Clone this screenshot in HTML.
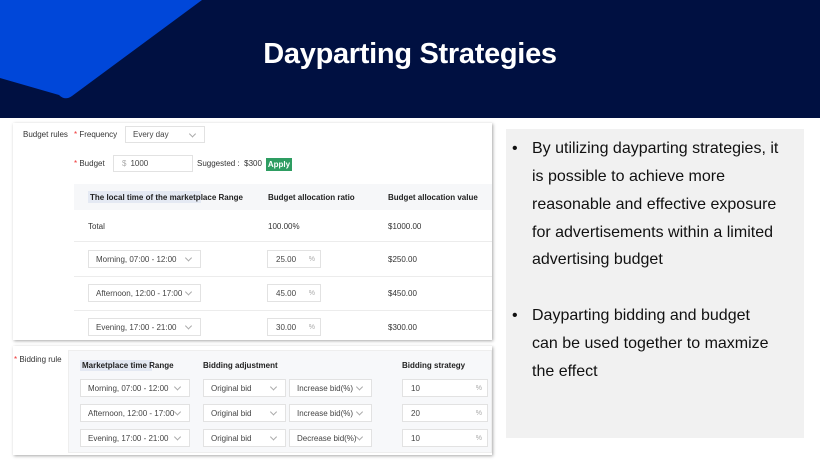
<!DOCTYPE html>
<html><head><style>
*{margin:0;padding:0;box-sizing:border-box}
body{width:820px;height:460px;position:relative;background:#fff;font-family:"Liberation Sans",sans-serif;overflow:hidden}
.a{position:absolute;white-space:nowrap}
.hdr{position:absolute;left:0;top:0;width:820px;height:118px;background:#001041}
.t{font-size:8px;color:#333}
.b{font-size:8px;color:#222;font-weight:bold}
.sel{position:absolute;border:1px solid #e2e2e2;background:#fff;font-size:8px;color:#444;padding-left:7px;display:flex;align-items:center}
.sel:after{content:"";position:absolute;right:9px;top:50%;width:4px;height:4px;border-right:1px solid #aaa;border-bottom:1px solid #aaa;transform:translateY(-70%) rotate(45deg)}
.inp{position:absolute;border:1px solid #e2e2e2;background:#fff;font-size:8px;color:#444;padding-left:8px;display:flex;align-items:center}
.pc{position:absolute;right:5px;color:#aaa;font-size:7px}
.line{position:absolute;height:1px;background:#ececec}
.bl{position:absolute;left:532px;font-size:16px;color:#111;white-space:nowrap}
.dot{position:absolute;left:512px;font-size:16px;color:#111}
</style></head><body>
<div class="hdr"></div>
<svg class="a" style="left:0;top:0" width="220" height="110"><path d="M0 0 L202 0 L72 96 Q65 101 59 95 L0 78 Z" fill="#0047d9"/></svg>
<div class="a" style="left:0;top:38px;width:820px;text-align:center;color:#fff;font-size:29px;font-weight:bold;letter-spacing:-0.3px">Dayparting Strategies</div>

<!-- card 1 -->
<div class="a" style="left:13px;top:123px;width:479px;height:217px;background:#fff;box-shadow:1px 1px 3px rgba(0,0,0,.35)"></div>
<div class="a t" style="left:23px;top:130px">Budget rules</div>
<div class="a t" style="left:74px;top:130px"><span style="color:#e33">*</span> Frequency</div>
<div class="sel" style="left:125px;top:126px;width:80px;height:17px">Every day</div>
<div class="a t" style="left:74px;top:159px"><span style="color:#e33">*</span> Budget</div>
<div class="inp" style="left:113px;top:155px;width:80px;height:17px"><span style="color:#aaa;margin-right:4px">$</span>1000</div>
<div class="a t" style="left:197px;top:159px">Suggested :&nbsp; $300</div>
<div class="a" style="left:266px;top:158px;width:26px;height:13px;background:#2e9d62;color:#fff;font-size:8px;font-weight:bold;text-align:center;line-height:13px">Apply</div>
<div class="a" style="left:74px;top:184px;width:418px;height:26px;background:#f6f7f9"></div>
<div class="a" style="left:88px;top:191px;width:113px;height:12px;background:#e4e9f3"></div>
<div class="a b" style="left:90px;top:193px">The local time of the marketplace Range</div>
<div class="a b" style="left:268px;top:193px">Budget allocation ratio</div>
<div class="a b" style="left:388px;top:193px">Budget allocation value</div>
<div class="a t" style="left:88px;top:222px">Total</div>
<div class="a t" style="left:268px;top:222px">100.00%</div>
<div class="a t" style="left:388px;top:222px">$1000.00</div>
<div class="line" style="left:74px;top:241px;width:418px"></div>
<div class="line" style="left:74px;top:276px;width:418px"></div>
<div class="line" style="left:74px;top:310px;width:418px"></div>
<div class="sel" style="left:88px;top:250px;width:113px;height:18px">Morning, 07:00 - 12:00</div>
<div class="sel" style="left:88px;top:284px;width:113px;height:18px">Afternoon, 12:00 - 17:00</div>
<div class="sel" style="left:88px;top:318px;width:113px;height:18px">Evening, 17:00 - 21:00</div>
<div class="inp" style="left:267px;top:250px;width:54px;height:18px">25.00<span class="pc">%</span></div>
<div class="inp" style="left:267px;top:284px;width:54px;height:18px">45.00<span class="pc">%</span></div>
<div class="inp" style="left:267px;top:318px;width:54px;height:18px">30.00<span class="pc">%</span></div>
<div class="a t" style="left:388px;top:255px">$250.00</div>
<div class="a t" style="left:388px;top:289px">$450.00</div>
<div class="a t" style="left:388px;top:323px">$300.00</div>

<!-- card 2 -->
<div class="a" style="left:13px;top:346px;width:479px;height:109px;background:#fff;box-shadow:1px 1px 3px rgba(0,0,0,.35)"></div>
<div class="a t" style="left:14px;top:355px"><span style="color:#e33">*</span> Bidding rule</div>
<div class="a" style="left:68px;top:350px;width:424px;height:103px;background:#f7f8fa;border:1px solid #eee"></div>
<div class="a" style="left:80px;top:360px;width:72px;height:11px;background:#e4e9f3"></div>
<div class="a b" style="left:82px;top:361px">Marketplace time Range</div>
<div class="a b" style="left:203px;top:361px">Bidding adjustment</div>
<div class="a b" style="left:402px;top:361px">Bidding strategy</div>
<div class="sel" style="left:80px;top:379px;width:110px;height:18px">Morning, 07:00 - 12:00</div>
<div class="sel" style="left:80px;top:404px;width:110px;height:18px">Afternoon, 12:00 - 17:00</div>
<div class="sel" style="left:80px;top:429px;width:110px;height:18px">Evening, 17:00 - 21:00</div>
<div class="sel" style="left:203px;top:379px;width:83px;height:18px">Original bid</div>
<div class="sel" style="left:203px;top:404px;width:83px;height:18px">Original bid</div>
<div class="sel" style="left:203px;top:429px;width:83px;height:18px">Original bid</div>
<div class="sel" style="left:289px;top:379px;width:83px;height:18px">Increase bid(%)</div>
<div class="sel" style="left:289px;top:404px;width:83px;height:18px">Increase bid(%)</div>
<div class="sel" style="left:289px;top:429px;width:83px;height:18px">Decrease bid(%)</div>
<div class="inp" style="left:402px;top:379px;width:86px;height:18px">10<span class="pc">%</span></div>
<div class="inp" style="left:402px;top:404px;width:86px;height:18px">20<span class="pc">%</span></div>
<div class="inp" style="left:402px;top:429px;width:86px;height:18px">10<span class="pc">%</span></div>

<!-- right panel -->
<div class="a" style="left:506px;top:129px;width:298px;height:309px;background:#f1f1f1"></div>
<div class="dot" style="top:140px">•</div>
<div class="bl" style="top:140px">By utilizing dayparting strategies, it</div>
<div class="bl" style="top:168px">is possible to achieve more</div>
<div class="bl" style="top:196px">reasonable and effective exposure</div>
<div class="bl" style="top:224px">for advertisements within a limited</div>
<div class="bl" style="top:251px">advertising budget</div>
<div class="dot" style="top:307px">•</div>
<div class="bl" style="top:307px">Dayparting bidding and budget</div>
<div class="bl" style="top:335px">can be used together to maxmize</div>
<div class="bl" style="top:363px">the effect</div>
</body></html>
